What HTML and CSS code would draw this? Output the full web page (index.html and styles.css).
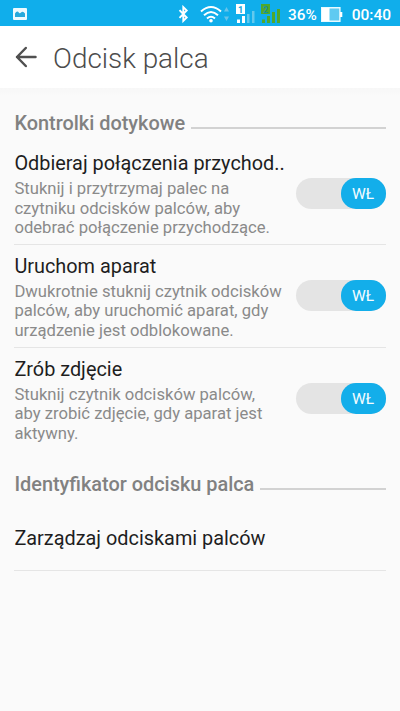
FILE: index.html
```html
<!DOCTYPE html>
<html lang="pl">
<head>
<meta charset="utf-8">
<title>Odcisk palca</title>
<link rel="stylesheet" href="styles.css">
</head>
<body>
<div class="status">
  <svg class="picture" width="14" height="12" viewBox="0 0 14 12"><rect width="14" height="12" rx="1" fill="#eefaff"/><path d="M2 9V5.5Q4 2 6 4.8Q7 6 8 4.5Q10 2.5 12 5.5V9z" fill="#27a9dc"/></svg>
  <svg class="bluetooth" width="11" height="18" viewBox="0 0 11 18"><path d="M1.5 5.2l7.2 7.4-3.4 3.3V2.1l3.4 3.3-7.2 7.4" fill="none" stroke="#fff" stroke-width="1.9"/></svg>
  <svg class="wifi" width="31" height="20" viewBox="0 0 31 20"><g fill="none" stroke="#fff" stroke-width="2"><path d="M1 7.5Q11-1.5 21 7.5M4 11.2Q11 4.8 18 11.2M7 14.5Q11 11 15 14.5"/></g><circle cx="11" cy="16.8" r="1.8" fill="#fff"/><path d="M24 7.5L26.5 3 29 7.5zM24 12.5h5L26.5 17z" fill="#68c4ea"/></svg>
  <svg class="signal" width="20" height="20" viewBox="0 0 20 20"><path d="M0 0h9v10H0zM1 15.5h3V19H1zM6 12h3v7H6z" fill="#fff"/><path d="M11 10h2.5v9H11zM16 7h2.5v12H16z" fill="#63c9ed"/><text x="2.1" y="8.5" class="sim" fill="#0e9fd8">1</text></svg>
  <svg class="signal2" width="20" height="20" viewBox="0 0 20 20"><path d="M0 0h9v10H0zM1 15.5h3V19H1zM6 12h3v7H6zM11 8h3v11h-3zM16 5h3v14h-3z" fill="#4fa82c"/><text x="2" y="8.5" class="sim" fill="#168fa5">2</text></svg>
  <span class="percent">36%</span>
  <svg class="battery" width="22" height="15" viewBox="0 0 22 15"><path d="M.7.7h18.2v13.6H.7z" fill="#5fcaf1" stroke="#e8faff" stroke-width="1.4"/><path d="M1 1h7.5v13H1zM19 5h2.3v5H19z" fill="#fff"/></svg>
  <span class="clock">00:40</span>
</div>
<header class="bar">
  <svg width="22" height="22" viewBox="0 0 22 22"><path d="M20.5 11H2M10.8 2L2 11l8.8 9" fill="none" stroke="#505050" stroke-width="2.5" stroke-linecap="round" stroke-linejoin="round"/></svg>
  <h1>Odcisk palca</h1>
</header>
<main>
  <h2><span>Kontrolki dotykowe</span></h2>
  <section class="row">
    <div class="text"><h3>Odbieraj połączenia przychod..</h3><p>Stuknij i przytrzymaj palec na<br>czytniku odcisków palców, aby<br>odebrać połączenie przychodzące.</p></div>
    <div class="switch"><span>WŁ</span></div>
  </section>
  <section class="row">
    <div class="text"><h3>Uruchom aparat</h3><p>Dwukrotnie stuknij czytnik odcisków<br>palców, aby uruchomić aparat, gdy<br>urządzenie jest odblokowane.</p></div>
    <div class="switch"><span>WŁ</span></div>
  </section>
  <section class="row last">
    <div class="text"><h3>Zrób zdjęcie</h3><p>Stuknij czytnik odcisków palców,<br>aby zrobić zdjęcie, gdy aparat jest<br>aktywny.</p></div>
    <div class="switch"><span>WŁ</span></div>
  </section>
  <h2 class="second"><span>Identyfikator odcisku palca</span></h2>
  <section class="manage"><h3>Zarządzaj odciskami palców</h3></section>
</main>
</body>
</html>
```
FILE: styles.css
```css
* { box-sizing: border-box; }
body { margin: 0; min-height: 711px; background: #fafafa; font-family: Roboto, sans-serif; overflow: hidden; }
h1, h2, h3, p { margin: 0; white-space: nowrap; }
svg { display: block; flex: none; }
.status { height: 26px; background: #10aeeb; display: flex; align-items: center; padding: 2px 9px 0 13px; color: #fff; }
.picture { margin-bottom: 1px; }
.bluetooth { margin-left: 151px; }
.wifi { margin-left: 11px; }
.signal { margin-left: 5px; }
.signal2 { margin-left: 5px; }
.sim { font: bold 9px Roboto, sans-serif; }
.percent { margin-left: 7px; width: 32px; font-size: 15.3px; line-height: 26px; padding-top: 1px; font-weight: 500; }
.battery { margin-left: 1px; }
.clock { margin-left: auto; font-size: 15.5px; line-height: 26px; padding-top: 1px; font-weight: 500; }
.bar { height: 62px; background: #fff; display: flex; align-items: center; padding: 0 15px 0; gap: 16px; }
h1 { font-size: 27.9px; line-height: 36px; font-weight: 300; color: #4c4c4c; padding-top: 4px; }
main { padding: 21px 14.5px 0 14.4px; background: linear-gradient(#f7f7f7, #fafafa 8px); }
h2 { display: flex; align-items: center; height: 28px; font-size: 19.9px; line-height: 28px; font-weight: 500; color: #818181; }
h2 span { padding-top: 2px; }
h2::after { content: ""; flex: 1; height: 2px; margin: 9px 0 0 6px; background: #d2d2d2; }
.row { height: 103px; display: flex; border-bottom: 1px solid #e5e5e5; padding-top: 8px; }
h2 + .row { height: 108px; padding-top: 14px; }
.row.last { border: 0; }
.text { flex: 1; min-width: 0; padding-top: 2px; }
h2 + .row .text { padding-top: 1px; }
h3 { font-size: 19.87px; line-height: 24px; font-weight: 400; color: #1e1e1e; }
p { padding-top: 2.6px; font-size: 16.65px; line-height: 19.6px; color: #8a8a8a; }
h2 + .row p { padding-top: 3px; }
.switch { width: 90px; height: 31px; margin-top: 27px; border-radius: 16px; background: #e4e4e4; display: flex; justify-content: flex-end; }
.switch span { width: 45px; border-radius: 15px; background: #13aeea; color: #f5fcff; font-size: 15.5px; line-height: 33px; text-align: center; }
.second { margin-top: 19px; }
.manage { height: 73px; padding-top: 29px; border-bottom: 1px solid #e5e5e5; }
```
